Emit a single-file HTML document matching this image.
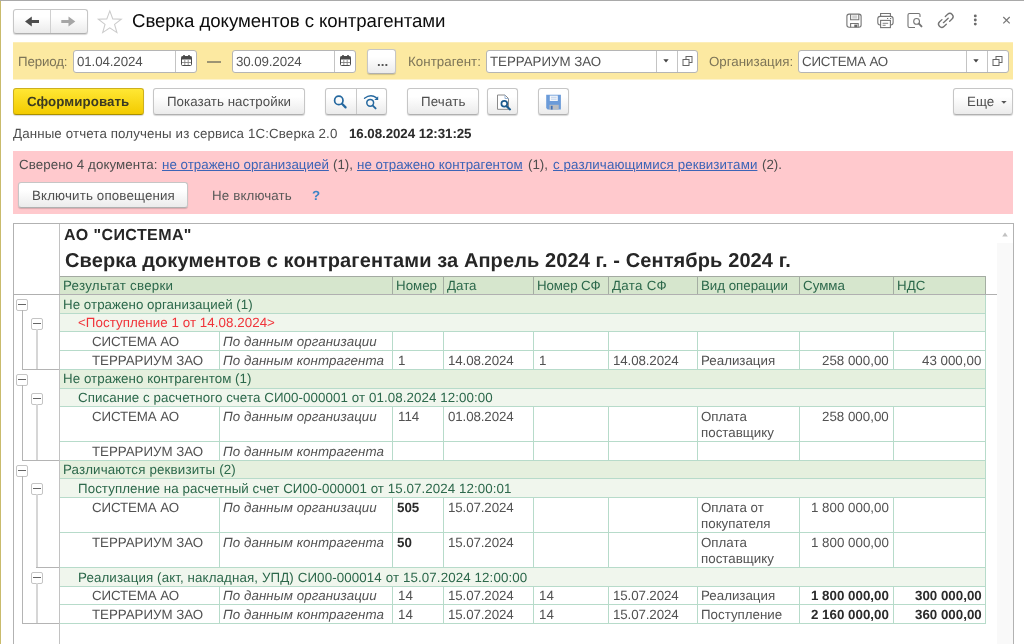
<!DOCTYPE html>
<html lang="ru"><head><meta charset="utf-8"><title>Сверка документов с контрагентами</title>
<style>
*{box-sizing:border-box;margin:0;padding:0}
html,body{width:1024px;height:644px;overflow:hidden;background:#fff}
body{text-rendering:geometricPrecision;font-family:"Liberation Sans",sans-serif;font-size:13.33px;color:#4e4e4e;position:relative}
.abs{position:absolute}
.t{position:absolute;white-space:nowrap;line-height:16px;will-change:transform}
.btn{position:absolute;border:1px solid #c6c6c6;border-bottom-color:#b0b0b0;border-radius:3px;background:linear-gradient(#ffffff 30%,#ebebeb);box-shadow:0 1px 1px rgba(0,0,0,.16)}
.inp{position:absolute;border:1px solid #b5b5b5;border-radius:3px;background:#fff}
.lbl{color:#7d7558}
.l{color:#3d64b6;text-decoration:underline}
.c{color:#525252}
.g{color:#2c684b}
.b{font-weight:bold;color:#2b2b2b}
.i{font-style:italic}
.hl{position:absolute;background:#b7dbca;height:1px}
.vl{position:absolute;background:#b7dbca;width:1px}
</style></head><body>
<div class="abs" style="left:0px;top:0px;width:1024px;height:1px;background:#a9a9a9;"></div>
<div class="abs" style="left:0px;top:1px;width:1px;height:643px;background:#c9bb6c;"></div>
<div class="btn" style="left:13px;top:9px;width:75px;height:25px"></div>
<div class="abs" style="left:50px;top:10px;width:1px;height:23px;background:#d0d0d0;"></div>
<svg class="abs" style="left:13px;top:9px" width="74" height="24" viewBox="0 0 74 24"><path d="M12 12.5 L18.8 7.5 V11 H26 V14 H18.8 V17.5 Z" fill="#4d4d4d"/><path d="M62.3 12.5 L55.5 7.5 V11 H48.3 V14 H55.5 V17.5 Z" fill="#a6a6a6"/></svg>
<svg class="abs" style="left:95.8px;top:8.6px" width="27.6" height="25.5" viewBox="0 0 26 24"><path d="M13 1.8 L15.8 9.3 L23.8 9.6 L17.5 14.5 L19.7 22.2 L13 17.7 L6.3 22.2 L8.5 14.5 L2.2 9.6 L10.2 9.3 Z" fill="#fff" stroke="#cbcbcb" stroke-width="1"/></svg>
<div class="t " style="left:131.6px;top:10px;letter-spacing:-0.08px;font-size:18.67px;line-height:22px;color:#0c0c0c">Сверка документов с контрагентами</div>
<svg class="abs" style="left:840px;top:8px" width="180" height="26" viewBox="840 8 180 26" fill="none" stroke="#747474" stroke-width="1.1">
<rect x="846.9" y="14.1" width="14.2" height="13.2" rx="2.2"/><path d="M850.6 14.2v5.5h8.2v-5.5M850.6 27.2v-3.7h7.6v3.7"/><path d="M852.2 16.1h5M852.2 17.9h5" stroke="#a0a0a0" stroke-width=".8"/><rect x="854.3" y="24.6" width="2.9" height="2.6" fill="#666" stroke="none"/>
<path d="M880.6 16.3v-2.8h9.8v2.8"/><rect x="877.8" y="16.4" width="15.3" height="8.6" rx="2.4"/><rect x="880.6" y="20.4" width="9.8" height="7.2" fill="#fff"/><path d="M882.6 23.3h5.6M882.6 25.3h3" stroke-width=".9"/><path d="M887 18.5h1.2M890 18.5h1.2" stroke-width="1"/>
<path d="M920 16.9V15a1.5 1.5 0 0 0-1.5-1.5H909.500a1.5 1.5 0 0 0-1.5 1.5V26a1.5 1.5 0 0 0 1.500 1.500H915"/><circle cx="916.6" cy="21.4" r="2.9"/><path d="M918.900 23.700L921.500 26.400" stroke-width="1.9" stroke-linecap="round"/>
<g transform="translate(945.8 20.4) rotate(-43)" stroke-width="1.35" stroke-linecap="round"><path d="M-2.300-3.200H-5.500a3.200 3.200 0 0 0 0 6.400H-2.300"/><path d="M2.300-3.200H5.500a3.200 3.200 0 0 1 0 6.400H2.300"/><path d="M-3.300 0H3.300"/></g>
<g fill="#6a6a6a" stroke="none"><circle cx="975.3" cy="15.900" r="1.45"/><circle cx="975.3" cy="20" r="1.45"/><circle cx="975.3" cy="24.100" r="1.45"/></g>
<path d="M1003.3 17l6.4 6.4M1009.7 17l-6.4 6.4" stroke="#777" stroke-width="1.2"/>
</svg>
<div class="abs" style="left:13px;top:42px;width:1000px;height:1px;background:#fdeeb8;"></div>
<div class="abs" style="left:13px;top:43px;width:1000px;height:36px;background:#fce9a1;"></div>
<div class="abs" style="left:13px;top:79px;width:1000px;height:1px;background:#fdf3cf;"></div>
<div class="t lbl" style="left:17.6px;top:53.6px;letter-spacing:-0.15px;">Период:</div>
<div class="inp" style="left:73px;top:50px;width:124px;height:23px"></div>
<div class="abs" style="left:175px;top:51px;width:1px;height:21px;background:#c4c4c4;"></div>
<svg class="abs" style="left:180.5px;top:55px" width="11" height="11" viewBox="0 0 11 11"><rect x="0.5" y="1.5" width="10" height="9" rx="1" fill="#fff" stroke="#4a4a4a"/><rect x="0.5" y="1.5" width="10" height="3" fill="#4a4a4a"/><rect x="2.2" y="0" width="1.6" height="2.6" fill="#4a4a4a"/><rect x="7.2" y="0" width="1.6" height="2.6" fill="#4a4a4a"/><path d="M1 7.5h9M3.8 5v5M7.2 5v5" stroke="#777" stroke-width=".8"/></svg>
<div class="t c" style="left:76.5px;top:53.6px;letter-spacing:-0.12px;">01.04.2024</div>
<div class="abs" style="left:207px;top:61px;width:14px;height:2px;background:#9c9473;"></div>
<div class="inp" style="left:232px;top:50px;width:124px;height:23px"></div>
<div class="abs" style="left:334px;top:51px;width:1px;height:21px;background:#c4c4c4;"></div>
<svg class="abs" style="left:339.5px;top:55px" width="11" height="11" viewBox="0 0 11 11"><rect x="0.5" y="1.5" width="10" height="9" rx="1" fill="#fff" stroke="#4a4a4a"/><rect x="0.5" y="1.5" width="10" height="3" fill="#4a4a4a"/><rect x="2.2" y="0" width="1.6" height="2.6" fill="#4a4a4a"/><rect x="7.2" y="0" width="1.6" height="2.6" fill="#4a4a4a"/><path d="M1 7.5h9M3.8 5v5M7.2 5v5" stroke="#777" stroke-width=".8"/></svg>
<div class="t c" style="left:235.5px;top:53.6px;letter-spacing:-0.12px;">30.09.2024</div>
<div class="btn" style="left:367px;top:49px;width:29px;height:25px"></div>
<div class="t b" style="left:377.0px;top:53.6px;color:#555">...</div>
<div class="t lbl" style="left:408.0px;top:53.6px;letter-spacing:0.03px;">Контрагент:</div>
<div class="inp" style="left:486px;top:50px;width:212px;height:23px"></div>
<div class="abs" style="left:656px;top:51px;width:1px;height:21px;background:#c4c4c4;"></div>
<div class="abs" style="left:677px;top:51px;width:1px;height:21px;background:#c4c4c4;"></div>
<div class="t c" style="left:490.0px;top:53.6px;letter-spacing:-0.04px;">ТЕРРАРИУМ ЗАО</div>
<div class="t lbl" style="left:709.0px;top:53.6px;">Организация:</div>
<div class="inp" style="left:798px;top:50px;width:211px;height:23px"></div>
<div class="abs" style="left:966px;top:51px;width:1px;height:21px;background:#c4c4c4;"></div>
<div class="abs" style="left:987px;top:51px;width:1px;height:21px;background:#c4c4c4;"></div>
<div class="t c" style="left:802.0px;top:53.6px;letter-spacing:-0.21px;">СИСТЕМА АО</div>
<svg class="abs" style="left:656px;top:54px" width="42" height="14" viewBox="0 0 42 14"><path d="M7.3 5.3h5.4L10 8.6z" fill="#444"/><g fill="#fff" stroke="#666" stroke-width="1"><rect x="30" y="2.5" width="6" height="6"/><rect x="27" y="5.5" width="6" height="6"/></g></svg>
<svg class="abs" style="left:966px;top:54px" width="42" height="14" viewBox="0 0 42 14"><path d="M7.3 5.3h5.4L10 8.6z" fill="#444"/><g fill="#fff" stroke="#666" stroke-width="1"><rect x="30" y="2.5" width="6" height="6"/><rect x="27" y="5.5" width="6" height="6"/></g></svg>
<div class="btn" style="left:13px;top:88px;width:131px;height:27px;background:linear-gradient(#ffe734,#f3cb00);border-color:#cdb01e;border-bottom-color:#a98f00"></div>
<div class="t b" style="left:27.3px;top:94px;letter-spacing:0.07px;color:#3b3a22">Сформировать</div>
<div class="btn" style="left:153px;top:88px;width:152px;height:27px"></div>
<div class="t " style="left:167.0px;top:94px;letter-spacing:0.03px;">Показать настройки</div>
<div class="btn" style="left:325px;top:88px;width:62px;height:27px"></div>
<div class="abs" style="left:356px;top:89px;width:1px;height:25px;background:#c9c9c9;"></div>
<svg class="abs" style="left:325px;top:88px" width="62" height="26" viewBox="325 88 62 26" fill="none" stroke="#25689f" stroke-linecap="round">
<circle cx="338.8" cy="100.4" r="4.2" stroke-width="1.7"/><path d="M342 103.8L345.6 107.4" stroke-width="2.2"/>
<circle cx="370.2" cy="102.8" r="3.4" stroke-width="1.5"/><path d="M372.8 105.6L375.6 108.4" stroke-width="1.9"/>
<path d="M364.5 98.3Q370.5 93.6 376.3 97.6" stroke-width="1.3"/><path d="M378.2 96.2v3.9h-3.9z" fill="#25689f" stroke="none"/>
</svg>
<div class="btn" style="left:407px;top:88px;width:72px;height:27px"></div>
<div class="t " style="left:420.5px;top:94px;letter-spacing:0.14px;">Печать</div>
<div class="btn" style="left:487px;top:88px;width:31px;height:27px"></div>
<svg class="abs" style="left:487px;top:88px" width="31" height="26" viewBox="487 88 31 26" fill="none">
<path d="M497.5 95h7.5l3.5 3.5v10.8h-11z" fill="#fff" stroke="#8a8a8a" stroke-width="1"/><path d="M505 95v3.5h3.5" stroke="#9ab4d4" stroke-width="1"/>
<circle cx="504.3" cy="103.8" r="2.9" stroke="#1d5b8d" stroke-width="1.7" fill="#fff"/><path d="M506.6 106.2L510 109.4" stroke="#1d5b8d" stroke-width="2.1" stroke-linecap="round"/>
</svg>
<div class="btn" style="left:538px;top:88px;width:31px;height:27px"></div>
<svg class="abs" style="left:538px;top:88px" width="31" height="26" viewBox="538 88 31 26">
<path d="M546.2 94.8h14.7v14.7h-13.2l-1.5-1.5z" fill="#6b9bd9"/><rect x="549.8" y="95.6" width="8" height="5.4" fill="#f4f7fb"/><path d="M551 97.3h5.6M551 99.2h5.6" stroke="#a9c3e6" stroke-width=".7"/>
<rect x="549.5" y="104.8" width="9.2" height="4.7" fill="#b9bcc0"/><rect x="550.8" y="105.8" width="1.8" height="3.7" fill="#3f6fb5"/>
</svg>
<div class="btn" style="left:953px;top:88px;width:60px;height:27px"></div>
<div class="t " style="left:966.5px;top:94px;">Еще</div>
<svg class="abs" style="left:1000px;top:100px" width="8" height="5" viewBox="0 0 8 5"><path d="M1.2 1h5.4L3.9 3.8z" fill="#555"/></svg>
<div class="t " style="left:13.0px;top:125.6px;letter-spacing:0.12px;">Данные отчета получены из сервиса 1С:Сверка 2.0</div>
<div class="t b" style="left:349.0px;top:125.6px;letter-spacing:-0.07px;">16.08.2024 12:31:25</div>
<div class="abs" style="left:13px;top:151px;width:1000px;height:63px;background:#ffc9cd;"></div>
<div class="t " style="left:19.0px;top:156.6px;letter-spacing:0.07px;">Сверено 4 документа:</div>
<div class="t l" style="left:161.5px;top:156.6px;letter-spacing:0.02px;">не отражено организацией</div>
<div class="t " style="left:332.5px;top:156.6px;">(1),</div>
<div class="t l" style="left:357.0px;top:156.6px;letter-spacing:0.03px;">не отражено контрагентом</div>
<div class="t " style="left:527.5px;top:156.6px;">(1),</div>
<div class="t l" style="left:552.5px;top:156.6px;letter-spacing:0.09px;">с различающимися реквизитами</div>
<div class="t " style="left:762.0px;top:156.6px;">(2).</div>
<div class="btn" style="left:18px;top:182px;width:170px;height:26px"></div>
<div class="t " style="left:32.0px;top:187.6px;letter-spacing:0.15px;">Включить оповещения</div>
<div class="t " style="left:212.0px;top:187.6px;letter-spacing:0.14px;color:#595959">Не включать</div>
<div class="t " style="left:312.3px;top:187.6px;color:#3c84c6;font-weight:bold">?</div>
<div class="abs" style="left:13px;top:223px;width:1001px;height:430px;border:1px solid #b2b2b2;background:#fff"></div>
<div class="abs" style="left:59px;top:224px;width:1px;height:425px;background:#c2c2c2;"></div>
<div class="abs" style="left:997px;top:243px;width:16px;height:401px;background:#f9f9f9;"></div>
<svg class="abs" style="left:1001px;top:231px" width="8" height="7" viewBox="0 0 8 7"><path d="M4 1.5L6.8 5.5H1.2z" fill="#c2c2c2"/></svg>
<div class="t b" style="left:64.4px;top:227px;letter-spacing:0.41px;font-size:16px;line-height:18px;color:#262626">АО "СИСТЕМА"</div>
<div class="t b" style="left:65.0px;top:249px;letter-spacing:0.10px;font-size:20px;line-height:24px;color:#262626">Сверка документов с контрагентами за Апрель 2024 г. - Сентябрь 2024 г.</div>
<div class="abs" style="left:60px;top:276px;width:925px;height:18px;background:#d6e6cd;"></div>
<div class="abs" style="left:60px;top:294px;width:925px;height:19px;background:#e5f0de;"></div>
<div class="abs" style="left:60px;top:313px;width:925px;height:18px;background:#f0f6ed;"></div>
<div class="abs" style="left:60px;top:331px;width:925px;height:19px;background:#ffffff;"></div>
<div class="abs" style="left:60px;top:350px;width:925px;height:19px;background:#ffffff;"></div>
<div class="abs" style="left:60px;top:369px;width:925px;height:19px;background:#e5f0de;"></div>
<div class="abs" style="left:60px;top:388px;width:925px;height:18px;background:#f0f6ed;"></div>
<div class="abs" style="left:60px;top:406px;width:925px;height:35px;background:#ffffff;"></div>
<div class="abs" style="left:60px;top:441px;width:925px;height:19px;background:#ffffff;"></div>
<div class="abs" style="left:60px;top:460px;width:925px;height:18px;background:#e5f0de;"></div>
<div class="abs" style="left:60px;top:478px;width:925px;height:19px;background:#f0f6ed;"></div>
<div class="abs" style="left:60px;top:497px;width:925px;height:35px;background:#ffffff;"></div>
<div class="abs" style="left:60px;top:532px;width:925px;height:35px;background:#ffffff;"></div>
<div class="abs" style="left:60px;top:567px;width:925px;height:19px;background:#f0f6ed;"></div>
<div class="abs" style="left:60px;top:586px;width:925px;height:18px;background:#ffffff;"></div>
<div class="abs" style="left:60px;top:604px;width:925px;height:19px;background:#ffffff;"></div>
<div class="hl" style="left:60px;top:276px;width:925px;background:#a4aaa2"></div>
<div class="hl" style="left:60px;top:294px;width:925px;background:#b7dbca"></div>
<div class="hl" style="left:60px;top:313px;width:925px;background:#b7dbca"></div>
<div class="hl" style="left:60px;top:331px;width:925px;background:#b7dbca"></div>
<div class="hl" style="left:60px;top:350px;width:925px;background:#b7dbca"></div>
<div class="hl" style="left:60px;top:369px;width:925px;background:#b7dbca"></div>
<div class="hl" style="left:60px;top:388px;width:925px;background:#b7dbca"></div>
<div class="hl" style="left:60px;top:406px;width:925px;background:#b7dbca"></div>
<div class="hl" style="left:60px;top:441px;width:925px;background:#b7dbca"></div>
<div class="hl" style="left:60px;top:460px;width:925px;background:#b7dbca"></div>
<div class="hl" style="left:60px;top:478px;width:925px;background:#b7dbca"></div>
<div class="hl" style="left:60px;top:497px;width:925px;background:#b7dbca"></div>
<div class="hl" style="left:60px;top:532px;width:925px;background:#b7dbca"></div>
<div class="hl" style="left:60px;top:567px;width:925px;background:#b7dbca"></div>
<div class="hl" style="left:60px;top:586px;width:925px;background:#b7dbca"></div>
<div class="hl" style="left:60px;top:604px;width:925px;background:#b7dbca"></div>
<div class="hl" style="left:60px;top:623px;width:926px"></div>
<div class="vl" style="left:392px;top:276px;height:18px;background:#a4aea2"></div>
<div class="vl" style="left:443px;top:276px;height:18px;background:#a4aea2"></div>
<div class="vl" style="left:533px;top:276px;height:18px;background:#a4aea2"></div>
<div class="vl" style="left:608px;top:276px;height:18px;background:#a4aea2"></div>
<div class="vl" style="left:697px;top:276px;height:18px;background:#a4aea2"></div>
<div class="vl" style="left:799px;top:276px;height:18px;background:#a4aea2"></div>
<div class="vl" style="left:893px;top:276px;height:18px;background:#a4aea2"></div>
<div class="vl" style="left:985px;top:276px;height:18px;background:#a4aea2"></div>
<div class="vl" style="left:985px;top:294px;height:19px;background:#b7dbca"></div>
<div class="vl" style="left:985px;top:313px;height:18px;background:#b7dbca"></div>
<div class="vl" style="left:219px;top:331px;height:19px;background:#b7dbca"></div>
<div class="vl" style="left:392px;top:331px;height:19px;background:#b7dbca"></div>
<div class="vl" style="left:443px;top:331px;height:19px;background:#b7dbca"></div>
<div class="vl" style="left:533px;top:331px;height:19px;background:#b7dbca"></div>
<div class="vl" style="left:608px;top:331px;height:19px;background:#b7dbca"></div>
<div class="vl" style="left:697px;top:331px;height:19px;background:#b7dbca"></div>
<div class="vl" style="left:799px;top:331px;height:19px;background:#b7dbca"></div>
<div class="vl" style="left:893px;top:331px;height:19px;background:#b7dbca"></div>
<div class="vl" style="left:985px;top:331px;height:19px;background:#b7dbca"></div>
<div class="vl" style="left:219px;top:350px;height:19px;background:#b7dbca"></div>
<div class="vl" style="left:392px;top:350px;height:19px;background:#b7dbca"></div>
<div class="vl" style="left:443px;top:350px;height:19px;background:#b7dbca"></div>
<div class="vl" style="left:533px;top:350px;height:19px;background:#b7dbca"></div>
<div class="vl" style="left:608px;top:350px;height:19px;background:#b7dbca"></div>
<div class="vl" style="left:697px;top:350px;height:19px;background:#b7dbca"></div>
<div class="vl" style="left:799px;top:350px;height:19px;background:#b7dbca"></div>
<div class="vl" style="left:893px;top:350px;height:19px;background:#b7dbca"></div>
<div class="vl" style="left:985px;top:350px;height:19px;background:#b7dbca"></div>
<div class="vl" style="left:985px;top:369px;height:19px;background:#b7dbca"></div>
<div class="vl" style="left:985px;top:388px;height:18px;background:#b7dbca"></div>
<div class="vl" style="left:219px;top:406px;height:35px;background:#b7dbca"></div>
<div class="vl" style="left:392px;top:406px;height:35px;background:#b7dbca"></div>
<div class="vl" style="left:443px;top:406px;height:35px;background:#b7dbca"></div>
<div class="vl" style="left:533px;top:406px;height:35px;background:#b7dbca"></div>
<div class="vl" style="left:608px;top:406px;height:35px;background:#b7dbca"></div>
<div class="vl" style="left:697px;top:406px;height:35px;background:#b7dbca"></div>
<div class="vl" style="left:799px;top:406px;height:35px;background:#b7dbca"></div>
<div class="vl" style="left:893px;top:406px;height:35px;background:#b7dbca"></div>
<div class="vl" style="left:985px;top:406px;height:35px;background:#b7dbca"></div>
<div class="vl" style="left:219px;top:441px;height:19px;background:#b7dbca"></div>
<div class="vl" style="left:392px;top:441px;height:19px;background:#b7dbca"></div>
<div class="vl" style="left:443px;top:441px;height:19px;background:#b7dbca"></div>
<div class="vl" style="left:533px;top:441px;height:19px;background:#b7dbca"></div>
<div class="vl" style="left:608px;top:441px;height:19px;background:#b7dbca"></div>
<div class="vl" style="left:697px;top:441px;height:19px;background:#b7dbca"></div>
<div class="vl" style="left:799px;top:441px;height:19px;background:#b7dbca"></div>
<div class="vl" style="left:893px;top:441px;height:19px;background:#b7dbca"></div>
<div class="vl" style="left:985px;top:441px;height:19px;background:#b7dbca"></div>
<div class="vl" style="left:985px;top:460px;height:18px;background:#b7dbca"></div>
<div class="vl" style="left:985px;top:478px;height:19px;background:#b7dbca"></div>
<div class="vl" style="left:219px;top:497px;height:35px;background:#b7dbca"></div>
<div class="vl" style="left:392px;top:497px;height:35px;background:#b7dbca"></div>
<div class="vl" style="left:443px;top:497px;height:35px;background:#b7dbca"></div>
<div class="vl" style="left:533px;top:497px;height:35px;background:#b7dbca"></div>
<div class="vl" style="left:608px;top:497px;height:35px;background:#b7dbca"></div>
<div class="vl" style="left:697px;top:497px;height:35px;background:#b7dbca"></div>
<div class="vl" style="left:799px;top:497px;height:35px;background:#b7dbca"></div>
<div class="vl" style="left:893px;top:497px;height:35px;background:#b7dbca"></div>
<div class="vl" style="left:985px;top:497px;height:35px;background:#b7dbca"></div>
<div class="vl" style="left:219px;top:532px;height:35px;background:#b7dbca"></div>
<div class="vl" style="left:392px;top:532px;height:35px;background:#b7dbca"></div>
<div class="vl" style="left:443px;top:532px;height:35px;background:#b7dbca"></div>
<div class="vl" style="left:533px;top:532px;height:35px;background:#b7dbca"></div>
<div class="vl" style="left:608px;top:532px;height:35px;background:#b7dbca"></div>
<div class="vl" style="left:697px;top:532px;height:35px;background:#b7dbca"></div>
<div class="vl" style="left:799px;top:532px;height:35px;background:#b7dbca"></div>
<div class="vl" style="left:893px;top:532px;height:35px;background:#b7dbca"></div>
<div class="vl" style="left:985px;top:532px;height:35px;background:#b7dbca"></div>
<div class="vl" style="left:985px;top:567px;height:19px;background:#b7dbca"></div>
<div class="vl" style="left:219px;top:586px;height:18px;background:#b7dbca"></div>
<div class="vl" style="left:392px;top:586px;height:18px;background:#b7dbca"></div>
<div class="vl" style="left:443px;top:586px;height:18px;background:#b7dbca"></div>
<div class="vl" style="left:533px;top:586px;height:18px;background:#b7dbca"></div>
<div class="vl" style="left:608px;top:586px;height:18px;background:#b7dbca"></div>
<div class="vl" style="left:697px;top:586px;height:18px;background:#b7dbca"></div>
<div class="vl" style="left:799px;top:586px;height:18px;background:#b7dbca"></div>
<div class="vl" style="left:893px;top:586px;height:18px;background:#b7dbca"></div>
<div class="vl" style="left:985px;top:586px;height:18px;background:#b7dbca"></div>
<div class="vl" style="left:219px;top:604px;height:19px;background:#b7dbca"></div>
<div class="vl" style="left:392px;top:604px;height:19px;background:#b7dbca"></div>
<div class="vl" style="left:443px;top:604px;height:19px;background:#b7dbca"></div>
<div class="vl" style="left:533px;top:604px;height:19px;background:#b7dbca"></div>
<div class="vl" style="left:608px;top:604px;height:19px;background:#b7dbca"></div>
<div class="vl" style="left:697px;top:604px;height:19px;background:#b7dbca"></div>
<div class="vl" style="left:799px;top:604px;height:19px;background:#b7dbca"></div>
<div class="vl" style="left:893px;top:604px;height:19px;background:#b7dbca"></div>
<div class="vl" style="left:985px;top:604px;height:19px;background:#b7dbca"></div>
<div class="abs" style="left:14px;top:294px;width:983px;height:1px;background:#b0b0b0;"></div>
<div class="abs" style="left:16px;top:298.5px;width:12px;height:12px;border:1px solid #c4c4c4;border-radius:2px;background:#fff"></div>
<div class="abs" style="left:18px;top:304.0px;width:8px;height:1px;background:#666;"></div>
<div class="abs" style="left:22px;top:310px;width:1px;height:59px;background:#b4b4b4;"></div>
<div class="abs" style="left:22px;top:369px;width:37px;height:1px;background:#b4b4b4;"></div>
<div class="abs" style="left:16px;top:373.5px;width:12px;height:12px;border:1px solid #c4c4c4;border-radius:2px;background:#fff"></div>
<div class="abs" style="left:18px;top:379.0px;width:8px;height:1px;background:#666;"></div>
<div class="abs" style="left:22px;top:385px;width:1px;height:75px;background:#b4b4b4;"></div>
<div class="abs" style="left:22px;top:460px;width:37px;height:1px;background:#b4b4b4;"></div>
<div class="abs" style="left:16px;top:464.5px;width:12px;height:12px;border:1px solid #c4c4c4;border-radius:2px;background:#fff"></div>
<div class="abs" style="left:18px;top:470.0px;width:8px;height:1px;background:#666;"></div>
<div class="abs" style="left:22px;top:476px;width:1px;height:147px;background:#b4b4b4;"></div>
<div class="abs" style="left:22px;top:623px;width:37px;height:1px;background:#b4b4b4;"></div>
<div class="abs" style="left:31px;top:317.5px;width:12px;height:12px;border:1px solid #c4c4c4;border-radius:2px;background:#fff"></div>
<div class="abs" style="left:33px;top:323.0px;width:8px;height:1px;background:#666;"></div>
<div class="abs" style="left:36px;top:329px;width:2px;height:40px;background:#d6d6d6;"></div>
<div class="abs" style="left:31px;top:392.5px;width:12px;height:12px;border:1px solid #c4c4c4;border-radius:2px;background:#fff"></div>
<div class="abs" style="left:33px;top:398.0px;width:8px;height:1px;background:#666;"></div>
<div class="abs" style="left:36px;top:404px;width:2px;height:56px;background:#d6d6d6;"></div>
<div class="abs" style="left:31px;top:482.5px;width:12px;height:12px;border:1px solid #c4c4c4;border-radius:2px;background:#fff"></div>
<div class="abs" style="left:33px;top:488.0px;width:8px;height:1px;background:#666;"></div>
<div class="abs" style="left:36px;top:494px;width:2px;height:73px;background:#d6d6d6;"></div>
<div class="abs" style="left:36px;top:567px;width:23px;height:1px;background:#b4b4b4;"></div>
<div class="abs" style="left:31px;top:571.5px;width:12px;height:12px;border:1px solid #c4c4c4;border-radius:2px;background:#fff"></div>
<div class="abs" style="left:33px;top:577.0px;width:8px;height:1px;background:#666;"></div>
<div class="abs" style="left:36px;top:583px;width:2px;height:40px;background:#d6d6d6;"></div>
<div class="t g" style="left:63.0px;top:278px;letter-spacing:0.27px;">Результат сверки</div>
<div class="t g" style="left:396.2px;top:278px;">Номер</div>
<div class="t g" style="left:447.0px;top:278px;">Дата</div>
<div class="t g" style="left:537.0px;top:278px;letter-spacing:-0.11px;">Номер СФ</div>
<div class="t g" style="left:612.0px;top:278px;letter-spacing:0.29px;">Дата СФ</div>
<div class="t g" style="left:700.6px;top:278px;letter-spacing:-0.03px;">Вид операции</div>
<div class="t g" style="left:802.6px;top:278px;">Сумма</div>
<div class="t g" style="left:896.5px;top:278px;">НДС</div>
<div class="t g" style="left:63.0px;top:297px;letter-spacing:0.04px;">Не отражено организацией (1)</div>
<div class="t " style="left:77.8px;top:315px;letter-spacing:0.06px;color:#f0343a">&lt;Поступление 1 от 14.08.2024&gt;</div>
<div class="t c" style="left:91.9px;top:334px;letter-spacing:-0.12px;">СИСТЕМА АО</div>
<div class="t c i" style="left:223.4px;top:334px;letter-spacing:0.08px;">По данным организации</div>
<div class="t c" style="left:91.9px;top:353px;letter-spacing:-0.04px;">ТЕРРАРИУМ ЗАО</div>
<div class="t c i" style="left:223.4px;top:353px;letter-spacing:0.08px;">По данным контрагента</div>
<div class="t c" style="left:397.5px;top:353px;">1</div>
<div class="t c" style="left:447.5px;top:353px;letter-spacing:-0.12px;">14.08.2024</div>
<div class="t c" style="left:538.5px;top:353px;">1</div>
<div class="t c" style="left:612.5px;top:353px;letter-spacing:-0.12px;">14.08.2024</div>
<div class="t c" style="left:700.6px;top:353px;">Реализация</div>
<div class="t c" style="right:134.8px;top:353px;">258 000,00</div>
<div class="t c" style="right:42.4px;top:353px;">43 000,00</div>
<div class="t g" style="left:63.0px;top:371px;letter-spacing:0.05px;">Не отражено контрагентом (1)</div>
<div class="t g" style="left:77.8px;top:390px;letter-spacing:0.08px;">Списание с расчетного счета СИ00-000001 от 01.08.2024 12:00:00</div>
<div class="t c" style="left:91.9px;top:409px;letter-spacing:-0.12px;">СИСТЕМА АО</div>
<div class="t c i" style="left:223.4px;top:409px;letter-spacing:0.08px;">По данным организации</div>
<div class="t c" style="left:397.5px;top:409px;">114</div>
<div class="t c" style="left:447.5px;top:409px;letter-spacing:-0.12px;">01.08.2024</div>
<div class="t c" style="left:700.6px;top:409px;">Оплата</div>
<div class="t c" style="left:700.6px;top:425px;">поставщику</div>
<div class="t c" style="right:134.8px;top:409px;">258 000,00</div>
<div class="t c" style="left:91.9px;top:444px;letter-spacing:-0.04px;">ТЕРРАРИУМ ЗАО</div>
<div class="t c i" style="left:223.4px;top:444px;letter-spacing:0.08px;">По данным контрагента</div>
<div class="t g" style="left:63.0px;top:462px;letter-spacing:0.16px;">Различаются реквизиты (2)</div>
<div class="t g" style="left:77.8px;top:481px;letter-spacing:0.07px;">Поступление на расчетный счет СИ00-000001 от 15.07.2024 12:00:01</div>
<div class="t c" style="left:91.9px;top:500px;letter-spacing:-0.12px;">СИСТЕМА АО</div>
<div class="t c i" style="left:223.4px;top:500px;letter-spacing:0.08px;">По данным организации</div>
<div class="t b" style="left:396.5px;top:500px;">505</div>
<div class="t c" style="left:447.5px;top:500px;letter-spacing:-0.12px;">15.07.2024</div>
<div class="t c" style="left:700.6px;top:500px;">Оплата от</div>
<div class="t c" style="left:700.6px;top:516px;">покупателя</div>
<div class="t c" style="right:134.8px;top:500px;">1 800 000,00</div>
<div class="t c" style="left:91.9px;top:535px;letter-spacing:-0.04px;">ТЕРРАРИУМ ЗАО</div>
<div class="t c i" style="left:223.4px;top:535px;letter-spacing:0.08px;">По данным контрагента</div>
<div class="t b" style="left:396.5px;top:535px;">50</div>
<div class="t c" style="left:447.5px;top:535px;letter-spacing:-0.12px;">15.07.2024</div>
<div class="t c" style="left:700.6px;top:535px;">Оплата</div>
<div class="t c" style="left:700.6px;top:551px;">поставщику</div>
<div class="t c" style="right:134.8px;top:535px;">1 800 000,00</div>
<div class="t g" style="left:77.8px;top:570px;letter-spacing:0.11px;">Реализация (акт, накладная, УПД) СИ00-000014 от 15.07.2024 12:00:00</div>
<div class="t c" style="left:91.9px;top:588px;letter-spacing:-0.12px;">СИСТЕМА АО</div>
<div class="t c i" style="left:223.4px;top:588px;letter-spacing:0.08px;">По данным организации</div>
<div class="t c" style="left:397.5px;top:588px;">14</div>
<div class="t c" style="left:447.5px;top:588px;letter-spacing:-0.12px;">15.07.2024</div>
<div class="t c" style="left:538.5px;top:588px;">14</div>
<div class="t c" style="left:612.5px;top:588px;letter-spacing:-0.12px;">15.07.2024</div>
<div class="t c" style="left:700.6px;top:588px;">Реализация</div>
<div class="t b" style="right:134.8px;top:588px;">1 800 000,00</div>
<div class="t b" style="right:42.4px;top:588px;">300 000,00</div>
<div class="t c" style="left:91.9px;top:607px;letter-spacing:-0.04px;">ТЕРРАРИУМ ЗАО</div>
<div class="t c i" style="left:223.4px;top:607px;letter-spacing:0.08px;">По данным контрагента</div>
<div class="t c" style="left:397.5px;top:607px;">14</div>
<div class="t c" style="left:447.5px;top:607px;letter-spacing:-0.12px;">15.07.2024</div>
<div class="t c" style="left:538.5px;top:607px;">14</div>
<div class="t c" style="left:612.5px;top:607px;letter-spacing:-0.12px;">15.07.2024</div>
<div class="t c" style="left:700.6px;top:607px;">Поступление</div>
<div class="t b" style="right:134.8px;top:607px;">2 160 000,00</div>
<div class="t b" style="right:42.4px;top:607px;">360 000,00</div>
</body></html>
